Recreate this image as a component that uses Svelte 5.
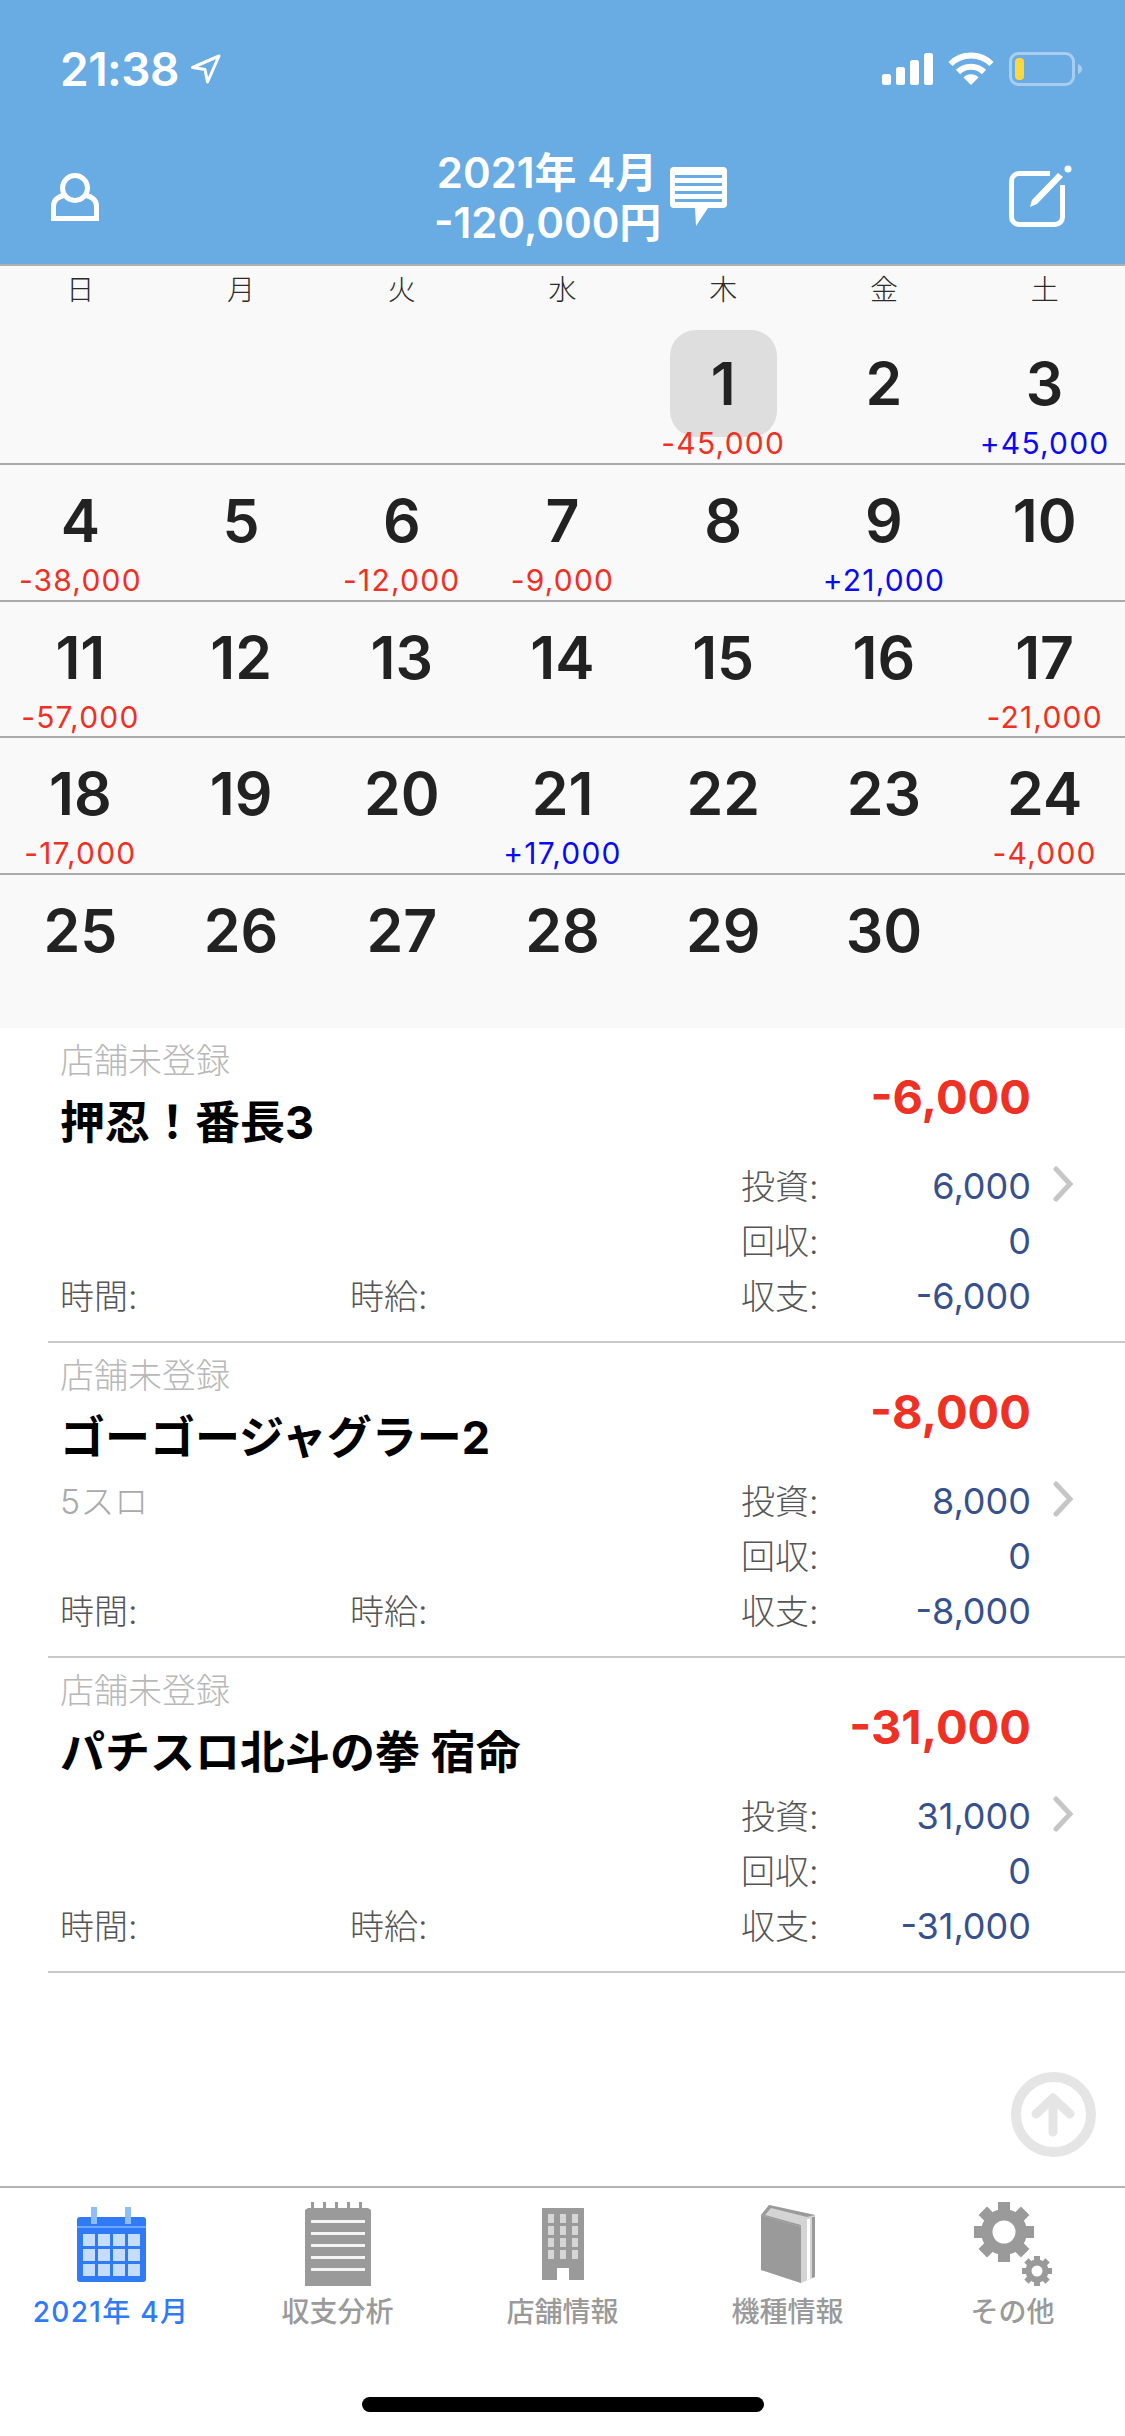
<script>
  const weekdays = ['日', '月', '火', '水', '木', '金', '土'];
  const weeks = [
    [null, null, null, null, { d: 1, v: '-45,000', today: true }, { d: 2 }, { d: 3, v: '+45,000' }],
    [{ d: 4, v: '-38,000' }, { d: 5 }, { d: 6, v: '-12,000' }, { d: 7, v: '-9,000' }, { d: 8 }, { d: 9, v: '+21,000' }, { d: 10 }],
    [{ d: 11, v: '-57,000' }, { d: 12 }, { d: 13 }, { d: 14 }, { d: 15 }, { d: 16 }, { d: 17, v: '-21,000' }],
    [{ d: 18, v: '-17,000' }, { d: 19 }, { d: 20 }, { d: 21, v: '+17,000' }, { d: 22 }, { d: 23 }, { d: 24, v: '-4,000' }],
    [{ d: 25 }, { d: 26 }, { d: 27 }, { d: 28 }, { d: 29 }, { d: 30 }, null]
  ];
  const records = [
    { name: '押忍！番長3', note: '', amount: '6,000' },
    { name: 'ゴーゴージャグラー2', note: '5スロ', amount: '8,000' },
    { name: 'パチスロ北斗の拳 宿命', note: '', amount: '31,000' }
  ];
  const teeth = [0, 45, 90, 135];
</script>

<div class="page">
  <header>
    <div class="status">
      <div class="time">21:38</div>
      <svg class="loc" width="30" height="30" viewBox="0 0 30 30">
        <path d="M1.5 13.5 L28 2 L16.5 28 L14 15.5 Z" fill="none" stroke="#fff" stroke-width="3" stroke-linejoin="round" />
      </svg>
      <svg class="signal" width="51" height="32" viewBox="0 0 51 32">
        <rect x="0" y="21" width="9" height="11" rx="2.5" fill="#fff" />
        <rect x="14" y="14" width="9" height="18" rx="2.5" fill="#fff" />
        <rect x="28" y="7" width="9" height="25" rx="2.5" fill="#fff" />
        <rect x="42" y="0" width="9" height="32" rx="2.5" fill="#fff" />
      </svg>
      <svg class="wifi" width="46" height="33" viewBox="0 0 46 33">
        <path d="M2.5 12 A29 29 0 0 1 43.5 12" fill="none" stroke="#fff" stroke-width="6" />
        <path d="M10 20 A18.5 18.5 0 0 1 36 20" fill="none" stroke="#fff" stroke-width="6" />
        <path d="M15.5 25.5 A10.5 10.5 0 0 1 30.5 25.5 L23 33 Z" fill="#fff" />
      </svg>
      <svg class="battery" width="73" height="34" viewBox="0 0 73 34">
        <rect x="1.5" y="1.5" width="63" height="31" rx="8" fill="none" stroke="#a9cdef" stroke-width="3" />
        <rect x="6" y="6" width="9" height="22" rx="4" fill="#fdd83c" />
        <path d="M69 12 C72 13 73 15 73 17 C73 19 72 21 69 22 Z" fill="#a9cdef" />
      </svg>
    </div>
    <div class="nav">
      <svg class="person" width="48" height="48" viewBox="0 0 48 48">
        <circle cx="24" cy="15" r="12.5" fill="none" stroke="#fff" stroke-width="5" />
        <path d="M14 22 C6 24 2.500 28 2.500 33 V45.500 H45.500 V33 C45.500 28 42 24 34 22" fill="none" stroke="#fff" stroke-width="5" />
      </svg>
      <div class="title">
        <div>2021年 4月</div>
        <div>-120,000円</div>
      </div>
      <svg class="chat" width="57" height="59" viewBox="0 0 57 59">
        <rect width="57" height="41" rx="4" fill="#fff" />
        <path d="M25 41 H38 L26 59 Z" fill="#fff" />
        <rect x="5" y="8" width="47" height="3" fill="#69abe3" />
        <rect x="5" y="16" width="47" height="3" fill="#69abe3" />
        <rect x="5" y="24" width="47" height="3" fill="#69abe3" />
        <rect x="5" y="32" width="47" height="3" fill="#69abe3" />
      </svg>
      <svg class="compose" width="64" height="64" viewBox="0 0 64 64">
        <path d="M41 9.500 H10 A7.500 7.500 0 0 0 2.500 17 V53 A7.500 7.500 0 0 0 10 60.500 H46 A7.500 7.500 0 0 0 53.500 53 V21" fill="none" stroke="#fff" stroke-width="5" />
        <path d="M21 43 L23 36 L49 9 L54 13 L28 40 Z" fill="#fff" />
        <circle cx="59" cy="5" r="3.500" fill="#fff" />
      </svg>
    </div>
  </header>

  <section class="calendar">
    <div class="weekdays">
      {#each weekdays as w}
        <div>{w}</div>
      {/each}
    </div>
    {#each weeks as week}
      <div class="week">
        {#each week as day}
          <div class="cell">
            {#if day}
              <div class="num" class:today={day.today}>{day.d}</div>
              {#if day.v}
                <div class="val" class:plus={day.v[0] === '+'}>{day.v}</div>
              {/if}
            {/if}
          </div>
        {/each}
      </div>
    {/each}
  </section>

  <section class="list">
    {#each records as r}
      <div class="item">
        <div class="top">
          <div>
            <div class="shop">店舗未登録</div>
            <div class="name">{r.name}</div>
          </div>
          <div class="amount">-{r.amount}</div>
        </div>
        <div class="stats">
          <div class="note">{r.note}</div>
          <div></div>
          <div class="lbl">投資:</div>
          <div class="num-val">{r.amount}</div>
          <svg class="chev" width="22" height="36" viewBox="0 0 22 36">
            <path d="M4 3 L18 18 L4 33" fill="none" stroke="#c6c6c6" stroke-width="5" stroke-linecap="round" />
          </svg>

          <div></div>
          <div></div>
          <div class="lbl">回収:</div>
          <div class="num-val">0</div>
          <div></div>

          <div class="lbl">時間:</div>
          <div class="lbl">時給:</div>
          <div class="lbl">収支:</div>
          <div class="num-val">-{r.amount}</div>
          <div></div>
        </div>
      </div>
    {/each}
  </section>

  <!-- floats over the list -->
  <svg class="up" width="85" height="85" viewBox="0 0 85 85">
    <circle cx="42.5" cy="42.5" r="37.5" fill="none" stroke="#e5e5e5" stroke-width="10" />
    <path d="M42 60 V27 M25 42 L42 26 L59 42" fill="none" stroke="#e5e5e5" stroke-width="9" stroke-linecap="round" stroke-linejoin="round" />
  </svg>

  <nav class="tabs">
    <div class="tab active">
      <div class="icon">
        <svg class="cal" width="69" height="75" viewBox="0 0 69 75">
          <rect y="10" width="69" height="65" rx="3" fill="#2f7af5" />
          <rect x="14" width="6" height="17" fill="#8fbdf8" />
          <rect x="48" width="6" height="17" fill="#8fbdf8" />
          <rect y="19" width="69" height="2" fill="#6fa6f7" />
          {#each [27, 42, 57] as y}
            {#each [6, 21, 36, 51] as x}
              <rect {x} {y} width="12" height="12" fill="#c6dcfb" />
            {/each}
          {/each}
        </svg>
      </div>
      <div class="tab-label">2021年 4月</div>
    </div>
    <div class="tab">
      <div class="icon">
        <svg width="66" height="84" viewBox="0 0 66 84">
          <path d="M0 8 L3 6 H6 V0 H9 V6 H18 V0 H21 V6 H30 V0 H33 V6 H42 V0 H45 V6 H54 V0 H57 V6 H63 L66 8 V84 H0 Z" fill="#9a9a9a" />
          {#each [18, 30, 42, 54, 66] as y}
            <rect x="6" {y} width="54" height="3" fill="#f4f4f4" />
          {/each}
        </svg>
      </div>
      <div class="tab-label">収支分析</div>
    </div>
    <div class="tab">
      <div class="icon">
        <svg width="42" height="72" viewBox="0 0 42 72">
          <rect width="42" height="72" fill="#9a9a9a" />
          {#each [6, 18, 30, 42] as y}
            {#each [6, 18, 30] as x}
              <rect {x} {y} width="6" height="9" fill="#d6d6d6" />
            {/each}
          {/each}
          <rect x="15" y="60" width="12" height="12" fill="#fff" />
        </svg>
      </div>
      <div class="tab-label">店舗情報</div>
    </div>
    <div class="tab">
      <div class="icon">
        <svg width="54" height="78" viewBox="0 0 54 78">
          <path d="M0 10 L8 0 L54 10 V72 L40 78 L0 65 Z" fill="#d4d4d4" />
          <path d="M0 10 L40 22 V78 L0 65 Z" fill="#9a9a9a" />
          <path d="M0 10 L8 0 L54 10 L46 12 L10 3 L4 10 L40 20 V22 Z" fill="#9a9a9a" />
          <path d="M46 14 H49 V74 L46 75 Z" fill="#fff" />
          <path d="M51 12 H54 V72 L51 73 Z" fill="#9a9a9a" />
        </svg>
      </div>
      <div class="tab-label">機種情報</div>
    </div>
    <div class="tab">
      <div class="icon">
        <svg width="78" height="84" viewBox="0 0 78 84">
          <g transform="translate(30 30)" fill="#9a9a9a">
            {#each teeth as a}
              <rect x="-6" y="-30" width="12" height="60" transform="rotate({a})" />
            {/each}
            <circle r="23" />
            <circle r="11.5" fill="#fff" />
          </g>
          <g transform="translate(63 69)" fill="#9a9a9a">
            {#each teeth as a}
              <rect x="-3" y="-15" width="6" height="30" transform="rotate({a})" />
            {/each}
            <circle r="11.5" />
            <circle r="5.5" fill="#fff" />
          </g>
        </svg>
      </div>
      <div class="tab-label">その他</div>
    </div>
  </nav>

  <div class="home"></div>
</div>

<style>
  :global(body) { margin: 0; background: #fff; }
  .page {
    position: relative;
    width: 1125px;
    height: 2436px;
    overflow: hidden;
    display: flex;
    flex-direction: column;
    font-family: Inter, "Noto Sans CJK JP", sans-serif;
    color: #000;
  }

  header { height: 264px; background: #69abe3; color: #fff; }
  .status { display: flex; align-items: flex-start; height: 164px; box-sizing: border-box; padding: 52px 43px 0 60px; }
  .time { font-size: 46px; font-weight: 600; line-height: 34px; letter-spacing: -0.5px; }
  .loc { margin: 2px 0 0 12px; }
  .signal { margin: 1px 0 0 auto; }
  .wifi { margin: 0 0 0 15px; }
  .battery { margin-left: 15px; }
  .nav { display: flex; align-items: flex-start; padding-left: 51px; height: 100px; margin-top: -13px; }
  .person { margin-top: 22px; }
  .title { width: 226px; margin: -3px 0 0 335px; text-align: center; font-size: 42px; font-weight: 600; line-height: 50px; white-space: nowrap; }
  .chat { margin: 16px 0 0 10px; }
  .compose { margin: 13px 0 0 282px; }

  .calendar { background: #f9f9f9; border-top: 2px solid #b0b0b0; }
  .weekdays { display: grid; grid-template-columns: repeat(7, 1fr); height: 62px; font-size: 28px; line-height: 48px; text-align: center; color: #2a2a2a; font-weight: 300; }
  .week { display: grid; grid-template-columns: repeat(7, 1fr); height: 135px; border-bottom: 2px solid #aaa; }
  .week:nth-child(n+3) { height: 134.5px; }
  .week:last-child { border-bottom: 0; height: 153px; }
  .cell { display: flex; flex-direction: column; align-items: center; }
  .num { width: 107px; height: 107px; margin-top: 2px; border-radius: 26px; display: flex; align-items: center; justify-content: center; font-size: 59px; font-weight: 600; color: #222; }
  .today { background: #dedede; }
  .val { height: 30px; margin-top: -9px; font-size: 30px; line-height: 30px; letter-spacing: 1.2px; color: #ee3124; white-space: nowrap; position: relative; }
  .plus { color: #0a0af5; }

  .item { height: 313px; margin-left: 48px; padding-left: 12px; border-bottom: 2px solid #c9c9c9; }
  .top { display: flex; justify-content: space-between; height: 131px; padding-right: 94px; }
  .shop { font-size: 34px; line-height: 40px; margin-top: 13px; color: #b8b8b8; font-weight: 300; }
  .name { font-size: 45px; line-height: 56px; margin-top: 14px; font-weight: 700; }
  .amount { font-size: 47px; font-weight: 700; line-height: 60px; margin-top: 39px; color: #ee3124; }
  .stats { display: grid; grid-template-columns: 290px 391px 100px 190px 43px; grid-auto-rows: 55px; align-items: center; font-size: 34px; }
  .lbl { color: #555; font-weight: 300; margin-top: -3px; }
  .note { color: #aaa; font-weight: 300; margin-top: -3px; }
  .num-val { text-align: right; color: #37508e; font-size: 36px; }
  .chev { justify-self: end; margin-top: -4px; }

  .up { position: absolute; left: 1011px; top: 2072px; }

  .tabs { display: flex; margin-top: auto; height: 211px; box-sizing: border-box; border-top: 2px solid #b4b4b4; padding-top: 14px; }
  .tab { flex: 1; display: flex; flex-direction: column; align-items: center; color: #9a9a9a; }
  .tab.active { color: #2f7af5; }
  .cal { margin-right: 2px; }
  .icon { height: 84px; display: flex; align-items: center; justify-content: center; }
  .tab-label { font-size: 28px; line-height: 36px; margin-top: 8px; font-weight: 500; white-space: nowrap; }
  .tab.active .tab-label { letter-spacing: 1.3px; margin-right: 3px; }
  .home { height: 15px; width: 402px; margin: 0 auto 24px; background: #000; border-radius: 8px; }
</style>
